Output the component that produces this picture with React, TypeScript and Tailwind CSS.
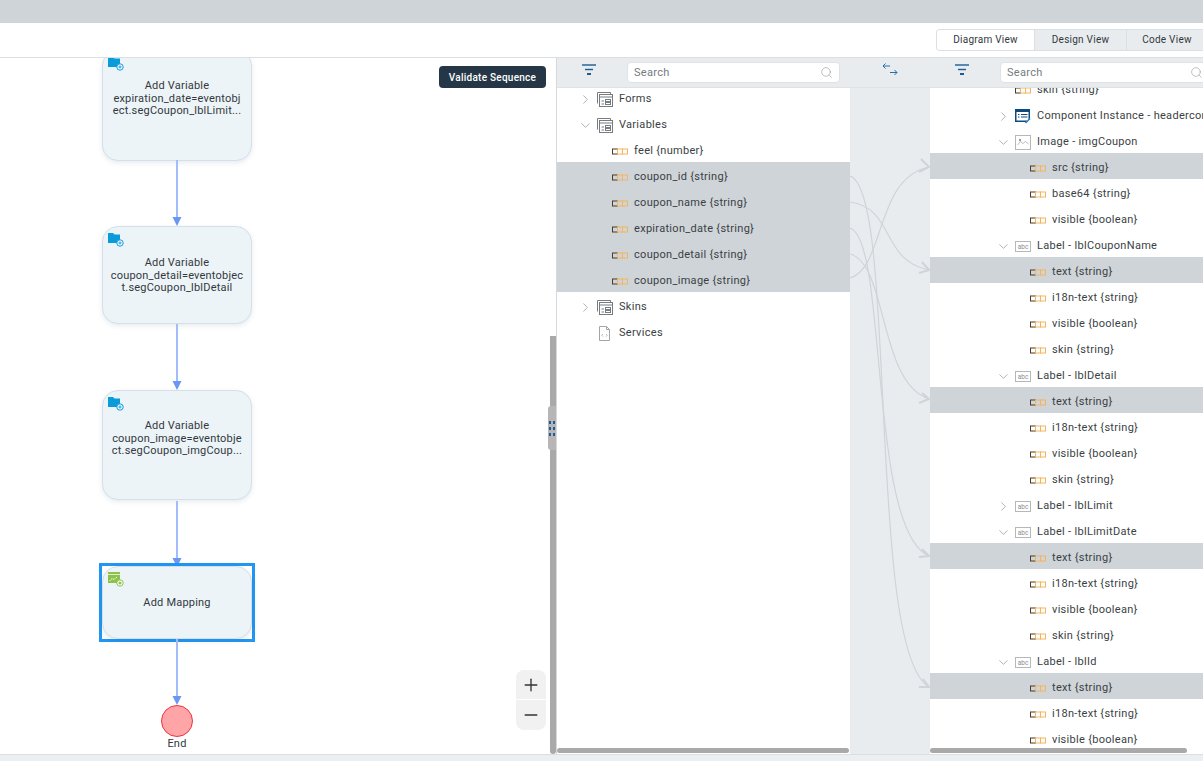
import { ChevronDown, ChevronRight, Minus, Plus, Search } from 'lucide-react';
import type { ReactNode } from 'react';

type IconKind = 'var' | 'form' | 'service' | 'component' | 'image' | 'label';

type TreeRow = {
  text: string;
  icon: IconKind;
  chevron?: 'open' | 'closed';
  selected?: boolean;
  pad: string;
};

const leftPad = 'pl-[23px]';
const leftLeaf = 'pl-[55px]';
const rightPad = 'pl-[68px]';
const rightLeaf = 'pl-[100px]';

const leftRows: TreeRow[] = [
  { text: 'Forms', icon: 'form', chevron: 'closed', pad: leftPad },
  { text: 'Variables', icon: 'form', chevron: 'open', pad: leftPad },
  { text: 'feel {number}', icon: 'var', pad: leftLeaf },
  { text: 'coupon_id {string}', icon: 'var', selected: true, pad: leftLeaf },
  { text: 'coupon_name {string}', icon: 'var', selected: true, pad: leftLeaf },
  { text: 'expiration_date {string}', icon: 'var', selected: true, pad: leftLeaf },
  { text: 'coupon_detail {string}', icon: 'var', selected: true, pad: leftLeaf },
  { text: 'coupon_image {string}', icon: 'var', selected: true, pad: leftLeaf },
  { text: 'Skins', icon: 'form', chevron: 'closed', pad: leftPad },
  { text: 'Services', icon: 'service', pad: leftPad },
];

const labelGroup = (name: string): TreeRow[] => [
  { text: `Label - ${name}`, icon: 'label', chevron: 'open', pad: rightPad },
  { text: 'text {string}', icon: 'var', selected: true, pad: rightLeaf },
  { text: 'i18n-text {string}', icon: 'var', pad: rightLeaf },
  { text: 'visible {boolean}', icon: 'var', pad: rightLeaf },
  { text: 'skin {string}', icon: 'var', pad: rightLeaf },
];

const rightRows: TreeRow[] = [
  { text: 'skin {string}', icon: 'var', pad: 'pl-[85px]' },
  { text: 'Component Instance - headercomponent', icon: 'component', chevron: 'closed', pad: rightPad },
  { text: 'Image - imgCoupon', icon: 'image', chevron: 'open', pad: rightPad },
  { text: 'src {string}', icon: 'var', selected: true, pad: rightLeaf },
  { text: 'base64 {string}', icon: 'var', pad: rightLeaf },
  { text: 'visible {boolean}', icon: 'var', pad: rightLeaf },
  ...labelGroup('lblCouponName'),
  ...labelGroup('lblDetail'),
  { text: 'Label - lblLimit', icon: 'label', chevron: 'closed', pad: rightPad },
  ...labelGroup('lblLimitDate'),
  ...labelGroup('lblId'),
];

function VarIcon() {
  return (
    <svg width="17" height="7" viewBox="0 0 17 7" className="shrink-0" fill="none">
      <rect x="0.5" y="1" width="5" height="5" stroke="#4a3a28" />
      <rect x="5.5" y="1" width="5" height="5" stroke="#f5b35c" />
      <rect x="10.5" y="1" width="5" height="5" stroke="#f5b35c" />
    </svg>
  );
}

function FormIcon() {
  return (
    <svg width="16" height="15" viewBox="0 0 16 15" className="shrink-0" fill="none" stroke="#777c80">
      <path d="M0.5 11.5V0.5H13.5V2" />
      <rect x="2.5" y="2.5" width="13" height="12" fill="#fff" fillOpacity="0.25" />
      <path d="M2.5 5H15.5" />
      <path d="M4.5 9H7M4.5 12H7" />
      <rect x="8.5" y="7.5" width="5" height="2" />
      <rect x="8.5" y="10.5" width="5" height="2" />
    </svg>
  );
}

function ServiceIcon() {
  return (
    <svg width="15" height="15" viewBox="0 0 15 15" className="shrink-0" fill="none" stroke="#a2a6aa">
      <path d="M2.5 0.5H9.5L12.5 3.5V14.5H2.5Z" />
      <path d="M9.5 0.5V3.5H12.5" />
      <path d="M6 8L4.8 9.3L6 10.6M9 8L10.2 9.3L9 10.6" strokeWidth="0.8" />
    </svg>
  );
}

function ComponentIcon() {
  return (
    <svg width="16" height="15" viewBox="0 0 16 15" className="shrink-0">
      <path d="M0 0H15V3H15V11H12V13H0Z" fill="#0f4a7d" />
      <rect x="1.5" y="3" width="12" height="8.5" fill="#fff" />
      <path d="M3 5H4.5V6H3ZM3 7.5H4.5V8.5H3ZM6 5H12.5V6H6ZM6 7.5H12.5V8.5H6Z" fill="#0f4a7d" />
      <path d="M10.5 14L15 9.5" stroke="#2f86c9" strokeWidth="1.6" />
    </svg>
  );
}

function ImageIcon() {
  return (
    <svg width="16" height="15" viewBox="0 0 16 15" className="shrink-0" fill="none">
      <rect x="0.5" y="0.5" width="15" height="14" fill="#fff" stroke="#b5b8bb" />
      <circle cx="5" cy="5" r="1.2" fill="#9a9da0" />
      <path d="M2.5 10L5.5 6.5L8 8.5L10.5 6.5L13.5 9" stroke="#a8abae" strokeWidth="0.8" />
    </svg>
  );
}

function LabelIcon() {
  return (
    <svg width="16" height="11" viewBox="0 0 16 11" className="shrink-0">
      <rect x="0.5" y="0.5" width="15" height="10" fill="#fff" stroke="#b5b8bb" />
      <text x="8" y="7.8" textAnchor="middle" fontSize="6.5" fill="#8a8d90" fontFamily="Roboto, sans-serif">
        abc
      </text>
    </svg>
  );
}

function RowIcon({ kind }: { kind: IconKind }) {
  if (kind === 'var') return <VarIcon />;
  if (kind === 'form') return <FormIcon />;
  if (kind === 'service') return <ServiceIcon />;
  if (kind === 'component') return <ComponentIcon />;
  if (kind === 'image') return <ImageIcon />;
  return <LabelIcon />;
}

function Row({ row }: { row: TreeRow }) {
  const isLeaf = row.icon === 'var' && row.pad !== 'pl-[85px]';
  return (
    <div
      className={`flex h-[26px] shrink-0 items-center whitespace-nowrap pt-[4px] ${row.pad} ${
        row.selected ? 'bg-[#cfd4d9]' : 'bg-white'
      }`}
    >
      {!isLeaf && row.pad !== 'pl-[85px]' && (
        <span className="mr-[7px] flex w-[10px] shrink-0 justify-center text-[#a3a6a9]">
          {row.chevron === 'open' && <ChevronDown size={15} strokeWidth={1.4} className="shrink-0" />}
          {row.chevron === 'closed' && <ChevronRight size={15} strokeWidth={1.4} className="shrink-0" />}
        </span>
      )}
      <span className="flex w-[16px] shrink-0 justify-start">
        <RowIcon kind={row.icon} />
      </span>
      <span className="ml-[6px] tracking-[0.3px]">{row.text}</span>
    </div>
  );
}

function FilterIcon() {
  return (
    <svg width="14" height="12" viewBox="0 0 14 12" fill="none" stroke="#1c5c92" strokeWidth="1.4">
      <path d="M0 1H14" />
      <path d="M3 5.5H11" />
      <path d="M5 10H9" strokeWidth="2" />
    </svg>
  );
}

function SwapIcon() {
  return (
    <svg width="16" height="13" viewBox="0 0 16 13" fill="none" stroke="#2b6ea6" strokeWidth="1">
      <path d="M8 3H1M3.5 0.5L1 3L3.5 5.5" />
      <path d="M8 9.5H15M12.5 7L15 9.5L12.5 12" />
    </svg>
  );
}

function SearchBox({ className }: { className: string }) {
  return (
    <div
      className={`flex h-[21px] shrink-0 items-center justify-between rounded-[4px] border border-[#dfe3e6] bg-white pl-[6px] pr-[6px] ${className}`}
    >
      <span className="pt-[1px] text-[11px] tracking-[0.3px] text-[#777b7f]">Search</span>
      <Search size={13} strokeWidth={1} className="shrink-0 text-[#8a8e92]" />
    </div>
  );
}

function FolderIcon() {
  return (
    <svg width="17" height="15" viewBox="0 0 17 15" className="absolute left-[5px] top-[5px]">
      <path d="M0 1H5L6.5 2.5H12V11H0Z" fill="#0a9bdb" />
      <circle cx="12" cy="11" r="3.2" fill="#fff" stroke="#0a9bdb" />
      <path d="M10.3 11H13.7M12 9.3V12.7" stroke="#0a9bdb" strokeWidth="0.9" />
    </svg>
  );
}

function MappingIcon() {
  return (
    <svg width="17" height="15" viewBox="0 0 17 15" className="absolute left-[5px] top-[5px]">
      <rect x="0" y="0" width="12" height="11" fill="#8bc34a" />
      <path d="M0 2.5H12" stroke="#fff" strokeWidth="0.7" />
      <path d="M1.5 9L4 6.5L6 7.5L9 5" stroke="#fff" strokeWidth="0.9" fill="none" strokeDasharray="1.5 0.6" />
      <circle cx="12" cy="11" r="3.2" fill="#fff" stroke="#8bc34a" />
      <circle cx="12" cy="11" r="1.5" fill="#8bc34a" />
    </svg>
  );
}

function FlowNode({
  className,
  icon,
  children,
}: {
  className: string;
  icon: ReactNode;
  children: ReactNode;
}) {
  return (
    <div
      className={`absolute whitespace-nowrap rounded-[16px] border border-[#d3e0ea] bg-[#ecf4f8] text-center text-[11px] leading-[12.7px] tracking-[0.2px] text-[#33383d] shadow-[0_2px_5px_rgba(60,90,120,0.12)] ${className}`}
    >
      {icon}
      {children}
    </div>
  );
}

function FlowArrow({ className }: { className: string }) {
  return (
    <svg width="12" height="66" viewBox="0 0 12 66" className={`absolute left-[171px] ${className}`}>
      <path d="M6 0V58" stroke="#a3bdfb" strokeWidth="2" />
      <path d="M1.5 57H10.5L6 66Z" fill="#6a97f5" />
    </svg>
  );
}

function DiagramCanvas() {
  return (
    <div className="relative w-[556px] shrink-0 overflow-hidden bg-white">
      <FlowNode className="left-[102px] top-[-8px] h-[111px] w-[150px] pt-[29px]" icon={<FolderIcon />}>
        <div>Add Variable</div>
        <div>expiration_date=eventobj</div>
        <div>ect.segCoupon_lblLimit...</div>
      </FlowNode>
      <FlowArrow className="top-[102px]" />
      <FlowNode className="left-[102px] top-[168px] h-[98px] w-[150px] pt-[30px]" icon={<FolderIcon />}>
        <div>Add Variable</div>
        <div>coupon_detail=eventobjec</div>
        <div>t.segCoupon_lblDetail</div>
      </FlowNode>
      <FlowArrow className="top-[266px]" />
      <FlowNode className="left-[102px] top-[332px] h-[110px] w-[150px] pt-[29px]" icon={<FolderIcon />}>
        <div>Add Variable</div>
        <div>coupon_image=eventobje</div>
        <div>ct.segCoupon_imgCoup...</div>
      </FlowNode>
      <FlowArrow className="top-[443px]" />
      <div className="absolute left-[99px] top-[505px] h-[79px] w-[156px] border-[3px] border-[#2196f3] bg-white">
        <FlowNode className="inset-0 flex items-center justify-center pt-[2px]" icon={<MappingIcon />}>
          <span>Add Mapping</span>
        </FlowNode>
      </div>
      <FlowArrow className="top-[581px]" />
      <div className="absolute left-[161px] top-[647px] h-[32px] w-[32px] rounded-full border border-[#f0343e] bg-[#ffa4a7]" />
      <div className="absolute left-[157px] top-[678px] w-[40px] text-center text-[11px] tracking-[0.2px] text-[#33383d]">
        End
      </div>

      <button className="absolute left-[439px] top-[8px] h-[22px] w-[107px] rounded-[4px] bg-[#253746] text-[10px] font-medium tracking-[0.25px] text-white">
        Validate Sequence
      </button>

      <div className="absolute left-[516px] top-[612px] flex h-[60px] w-[30px] flex-col rounded-[8px] bg-[#f1f1f1] text-[#333]">
        <div className="flex h-[30px] items-center justify-center border-b border-white">
          <Plus size={20} strokeWidth={1.6} />
        </div>
        <div className="flex flex-1 items-center justify-center">
          <Minus size={20} strokeWidth={1.6} />
        </div>
      </div>

      {/* vertical scrollbar + resize grip */}
      <div className="absolute bottom-0 right-0 top-[278px] w-[6px] rounded-b-[3px] bg-[#a9a9a9]" />
      <div className="absolute right-0 top-[348px] flex h-[44px] w-[8px] flex-col items-center justify-center gap-[3px] rounded-l-[3px] bg-[#b7b5b5]">
        <span className="h-[3px] w-[6px] border-x-2 border-[#1c5c92]" />
        <span className="h-[3px] w-[6px] border-x-2 border-[#1c5c92]" />
        <span className="h-[3px] w-[6px] border-x-2 border-[#1c5c92]" />
      </div>
    </div>
  );
}

function Connections() {
  return (
    <svg width="80" height="666" viewBox="850 88 80 666" className="absolute inset-0" fill="none" stroke="#cfd4d9" strokeWidth="1.2">
      <path d="M850 278C885 268 875 178 929 167" />
      <path d="M850 202C895 208 880 260 929 270" />
      <path d="M850 176C898 190 866 650 929 687" />
      <path d="M850 228C888 240 868 530 929 556" />
      <path d="M850 254C888 264 878 382 929 399" />
      <g strokeWidth="2">
        <path d="M921 159L929 167L919 172" />
        <path d="M922 262L929 270L919 273" />
        <path d="M922 393L929 399L919 403" />
        <path d="M922 549L929 556L919 557" />
        <path d="M923 679L929 687L919 687" />
      </g>
    </svg>
  );
}

export default function App() {
  return (
    <div className="flex h-[761px] w-[1203px] flex-col overflow-hidden bg-white font-['Roboto',sans-serif] text-[11px] text-[#3a3f44]">
      <div className="h-[23px] shrink-0 bg-[#cfd4d8]" />

      {/* View tabs */}
      <div className="flex h-[35px] shrink-0 items-center justify-end border-b border-[#dcdfe2] bg-white pb-[1px]">
        <div className="flex h-[22px] w-[267px] overflow-hidden rounded-l-[4px] border border-r-0 border-[#dcdfe2] text-[10px] tracking-[0.25px] text-[#33383d]">
          <div className="flex w-[97px] items-center justify-center bg-white">Diagram View</div>
          <div className="flex w-[92px] items-center justify-center border-l border-[#dcdfe2] bg-[#e9ecef]">Design View</div>
          <div className="flex flex-1 items-center justify-center border-l border-[#dcdfe2] bg-[#e9ecef] pl-[4px]">Code View</div>
        </div>
      </div>

      <div className="flex min-h-0 flex-1">
        <DiagramCanvas />

        <div className="flex min-w-0 flex-1 flex-col border-l border-[#d5d9dc]">
          <div className="flex h-[30px] shrink-0 items-center border-b border-[#dfe2e5] bg-[#e9ecef]">
            <div className="w-[70px] shrink-0 pb-[6px] pl-[25px]">
              <FilterIcon />
            </div>
            <SearchBox className="w-[213px]" />
            <div className="flex w-[100px] shrink-0 justify-center pb-[6px]">
              <SwapIcon />
            </div>
            <div className="w-[60px] shrink-0 pb-[6px] pl-[15px]">
              <FilterIcon />
            </div>
            <SearchBox className="w-[210px]" />
          </div>

          <div className="flex min-h-0 flex-1">
            <div className="relative w-[293px] shrink-0 overflow-hidden">
              <div className="-mt-[4px] flex flex-col">
                {leftRows.map((row) => (
                  <Row key={row.text} row={row} />
                ))}
              </div>
              <div className="absolute bottom-[1px] left-0 right-[1px] h-[5px] rounded-[3px] bg-[#a9a9a9]" />
            </div>

            <div className="relative w-[80px] shrink-0 bg-[#e9ecef]">
              <Connections />
            </div>

            <div className="relative min-w-0 flex-1 overflow-hidden">
              <div className="-mt-[13px] flex flex-col">
                {rightRows.map((row, i) => (
                  <Row key={i} row={row} />
                ))}
              </div>
              <div className="absolute bottom-[1px] left-0 h-[5px] w-[257px] rounded-[3px] bg-[#a9a9a9]" />
            </div>
          </div>
        </div>
      </div>

      <div className="h-[7px] shrink-0 border-t border-[#dcdfe2] bg-[#eceff1]" />
    </div>
  );
}
